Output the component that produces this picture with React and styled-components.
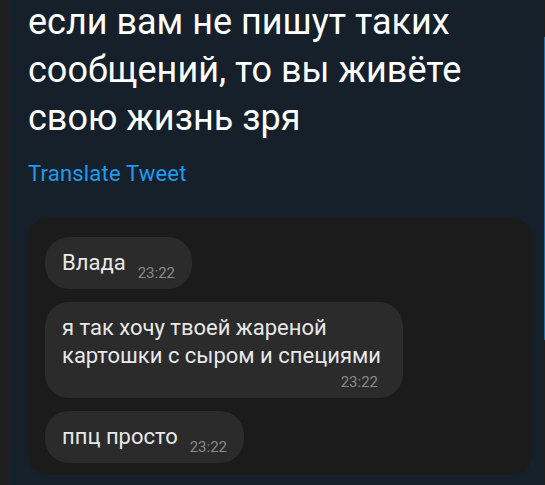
import React from "react";
import styled, { createGlobalStyle } from "styled-components";

const GlobalStyle = createGlobalStyle`
  html, body {
    margin: 0;
    padding: 0;
    background: #15202b;
  }
  body {
    font-family: Roboto, "Noto Sans", "Liberation Sans", sans-serif;
    overflow: hidden;
  }
`;

const messages = [
  { id: 1, text: "Влада", time: "23:22" },
  { id: 2, text: "я так хочу твоей жареной картошки с сыром и специями", time: "23:22", stacked: true },
  { id: 3, text: "ппц просто", time: "23:22" },
];

const Page = styled.div`
  display: flex;
  width: 545px;
  height: 485px;
  overflow: hidden;
`;

const SideStrip = styled.div`
  width: 9px;
  flex-shrink: 0;
  background: #1f1f1f;
`;

const Main = styled.main`
  flex: 1;
  padding: 0 12px 0 19px;
  background: #15202b;
`;

const ScrollTrack = styled.div`
  width: 1px;
  flex-shrink: 0;
  background: #1f1f1f;
`;

const ScrollThumb = styled.div`
  margin-top: 37px;
  height: 303px;
  background: #1d6fa5;
`;

const TweetText = styled.p`
  margin: -2px 0 0;
  color: #ffffff;
  font-size: 36px;
  line-height: 48px;
`;

const Translate = styled.a`
  display: block;
  margin-top: 19px;
  color: #1d9bf0;
  font-size: 22px;
  line-height: 26px;
  letter-spacing: 0.2px;
  text-decoration: none;
`;

const ChatCard = styled.div`
  margin-top: 31px;
  width: 504px;
  box-sizing: border-box;
  padding: 19px 17px 12px;
  background: #1b1b1b;
  border-radius: 20px;
  display: flex;
  flex-direction: column;
  align-items: flex-start;
  gap: 13px;
`;

const Bubble = styled.div`
  display: flex;
  flex-direction: ${(p) => (p.$stacked ? "column" : "row")};
  align-items: flex-end;
  gap: ${(p) => (p.$stacked ? "5px" : "12px")};
  padding: 12px ${(p) => (p.$stacked ? "19px" : "17px")} 8px 17px;
  background: #2b2b2c;
  border-radius: 24px;
`;

const BubbleText = styled.span`
  color: #e8e8e8;
  font-size: 22px;
  line-height: 28px;
  max-width: ${(p) => (p.$stacked ? "322px" : "none")};
  margin-bottom: ${(p) => (p.$stacked ? "0" : "4px")};
`;

const Time = styled.span`
  color: #8a8a8a;
  font-size: 15px;
  line-height: 15px;
  margin-right: ${(p) => (p.$stacked ? "6px" : "0")};
`;

export default function App() {
  return (
    <>
      <GlobalStyle />
      <Page>
        <SideStrip />
        <Main>
          <TweetText>если вам не пишут таких сообщений, то вы живёте свою жизнь зря</TweetText>
          <Translate href="#">Translate Tweet</Translate>
          <ChatCard>
            {messages.map((m) => (
              <Bubble key={m.id} $stacked={m.stacked}>
                <BubbleText $stacked={m.stacked}>{m.text}</BubbleText>
                <Time $stacked={m.stacked}>{m.time}</Time>
              </Bubble>
            ))}
          </ChatCard>
        </Main>
        <ScrollTrack>
          <ScrollThumb />
        </ScrollTrack>
      </Page>
    </>
  );
}
